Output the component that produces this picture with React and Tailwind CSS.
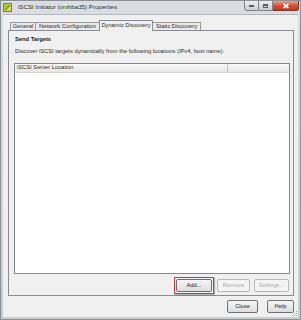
export default function App() {
  const btn =
    "h-[13px] flex items-center justify-center border border-[#707070] rounded-[2px] bg-gradient-to-b from-[#f6f6f6] to-[#dedede] text-[#222]";
  const btnDis =
    "h-[13px] flex items-center justify-center border border-[#b8b8b8] rounded-[2px] bg-[#f4f4f4] text-[#a8a8a8]";
  return (
    <div className="w-[301px] h-[320px] overflow-hidden flex flex-col border border-[#8c9196] bg-gradient-to-b from-[#dadee2] to-[#c8cdd2] font-['Liberation_Sans',Arial,sans-serif] text-[5.75px] leading-none text-[#2b2b2b]">
      {/* Title bar */}
      <div className="h-[13px] flex items-start shrink-0">
        <div className="ml-[2px] mt-[2px] w-[9px] h-[9px]">
          <svg width="9" height="9" viewBox="0 0 9 9">
            <rect x="0.5" y="0.5" width="8" height="8" fill="#e9d64c" stroke="#6c8a2a" />
            <path d="M2 7 L7 2" stroke="#4f9a2a" strokeWidth="1.6" />
            <rect x="1.5" y="1.5" width="3" height="3" fill="#8cc44a" />
          </svg>
        </div>
        <div className="ml-[6px] mt-[3px] text-[6.2px] text-[#1f1f1f] [text-shadow:0_0_3px_#ffffff]">
          iSCSI Initiator (vmhba35) Properties
        </div>
        <div className="flex-1" />
        <div className="flex mr-[1px] -mt-px">
          <div className="w-[15px] h-[11px] border border-[#7d838a] rounded-bl-[3px] bg-gradient-to-b from-[#eef0f3] to-[#c9ced4] flex items-end justify-center pb-[3px]">
            <div className="w-[5px] h-[2px] bg-[#59606a]" />
          </div>
          <div className="w-[14px] h-[11px] border-y border-r border-[#7d838a] bg-gradient-to-b from-[#eef0f3] to-[#c9ced4] flex items-center justify-center">
            <div className="w-[5px] h-[4px] border border-[#59606a] border-t-2" />
          </div>
          <div className="w-[26px] h-[11px] border-y border-r border-[#7a3525] rounded-br-[3px] bg-gradient-to-b from-[#e9a08b] via-[#d2543a] to-[#c0391f] flex items-center justify-center">
            <svg width="8" height="6" viewBox="0 0 8 6">
              <path d="M1.5 0.8 L6.5 5.2 M6.5 0.8 L1.5 5.2" stroke="#ffffff" strokeWidth="1.6" />
            </svg>
          </div>
        </div>
      </div>

      {/* Client */}
      <div className="relative flex-1 mx-[2px] mb-[2px] bg-[#f0f0f0] border-t border-[#b4b9bf] flex flex-col pl-[5px] pr-[4px] pt-[5px] pb-[5px]">
        {/* Tabs */}
        <div className="h-[10px] flex items-end pl-[2px] shrink-0 relative z-10">
          <div className="w-[25px] h-[8px] border-t border-l border-[#9a9a9a] bg-[#eaeaea] flex items-center justify-center">
            General
          </div>
          <div className="w-[64px] h-[8px] border-t border-l border-[#9a9a9a] bg-[#eaeaea] flex items-center justify-center">
            Network Configuration
          </div>
          <div className="w-[54px] h-[11px] -mb-px border-t border-x border-[#898c95] bg-[#f0f0f0] flex items-center justify-center pb-[1px]">
            Dynamic Discovery
          </div>
          <div className="w-[48px] h-[8px] border-t border-r border-[#9a9a9a] bg-[#eaeaea] flex items-center justify-center">
            Static Discovery
          </div>
        </div>

        {/* Panel */}
        <div className="flex-1 border border-[#898c95] bg-[#f0f0f0] flex flex-col pl-[5px] pr-[3px] pt-[5px] pb-px">
          <div className="h-[8px] flex items-center ml-[1px] font-bold text-[#1a1a1a]">Send Targets</div>
          <div className="h-[8px] mt-[4px] flex items-center ml-[1px]">
            Discover iSCSI targets dynamically from the following locations (IPv4, host name):
          </div>
          <div className="flex-1 mt-[7px] border border-[#828790] bg-white flex flex-col">
            <div className="h-[9px] flex border-b border-[#d5d5d5] bg-gradient-to-b from-[#fafafa] to-[#e6e6e6]">
              <div className="w-[213px] border-r border-[#c5c5c5] flex items-center pl-[2px]">
                iSCSI Server Location
              </div>
              <div className="flex-1" />
            </div>
            <div className="flex-1" />
          </div>
          <div className="h-[17px] mt-[3px] flex items-center justify-end pr-[1px] gap-[3px]">
            <div className="border border-[#d2363b] p-px shadow-[1px_1px_1px_rgba(0,0,0,0.25)]">
              <div className={btn + " w-[36px]"}>Add...</div>
            </div>
            <div className="flex gap-[4px]">
              <div className={btnDis + " w-[33px]"}>Remove</div>
              <div className={btnDis + " w-[35px]"}>Settings...</div>
            </div>
          </div>
        </div>

        {/* Bottom buttons */}
        <div className="h-[12px] mt-[4px] flex justify-end gap-[9px] shrink-0">
          <div className={btn + " w-[31px] h-[12px]"}>Close</div>
          <div className={btn + " w-[27px] h-[12px]"}>Help</div>
        </div>

        {/* Resize grip */}
        <svg className="absolute right-0 bottom-0" width="7" height="7" viewBox="0 0 7 7">
          <rect x="5" y="1" width="1" height="1" fill="#9aa0a6" />
          <rect x="3" y="3" width="1" height="1" fill="#9aa0a6" />
          <rect x="5" y="3" width="1" height="1" fill="#9aa0a6" />
          <rect x="1" y="5" width="1" height="1" fill="#9aa0a6" />
          <rect x="3" y="5" width="1" height="1" fill="#9aa0a6" />
          <rect x="5" y="5" width="1" height="1" fill="#9aa0a6" />
        </svg>
      </div>
    </div>
  );
}
